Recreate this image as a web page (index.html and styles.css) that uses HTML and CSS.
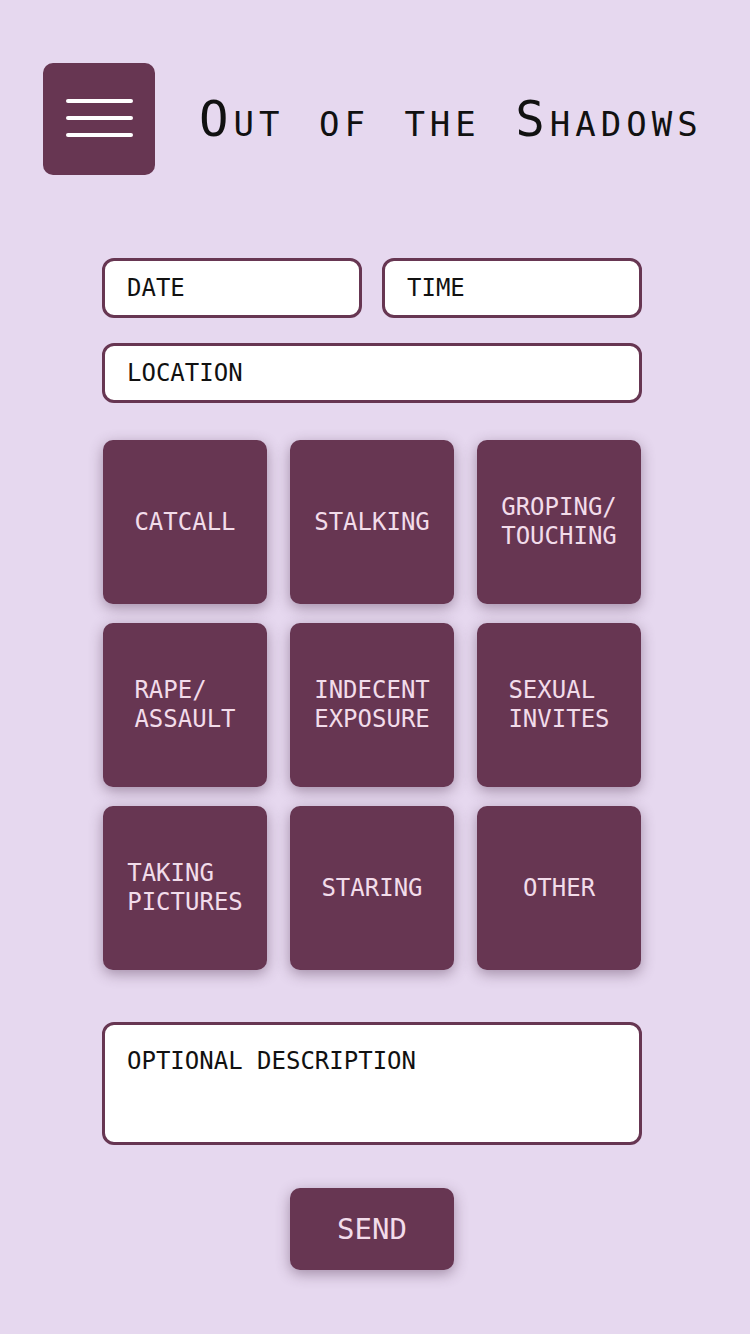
FILE: index.html
```html
<!DOCTYPE html>
<html>
<head>
<meta charset="utf-8">
<link rel="stylesheet" href="styles.css">
</head>
<body>
<header class="top">
  <div class="menu-btn">
    <span class="bar"></span><span class="bar"></span><span class="bar"></span>
  </div>
  <h1 class="title">Out of the Shadows</h1>
</header>
<main class="form">
  <div class="row">
    <div class="field">DATE</div>
    <div class="field">TIME</div>
  </div>
  <div class="field">LOCATION</div>
  <div class="tiles">
    <div class="tile"><span>CATCALL</span></div>
    <div class="tile"><span>STALKING</span></div>
    <div class="tile"><span>GROPING/<br>TOUCHING</span></div>
    <div class="tile"><span>RAPE/<br>ASSAULT</span></div>
    <div class="tile"><span>INDECENT<br>EXPOSURE</span></div>
    <div class="tile"><span>SEXUAL<br>INVITES</span></div>
    <div class="tile"><span>TAKING<br>PICTURES</span></div>
    <div class="tile"><span>STARING</span></div>
    <div class="tile"><span>OTHER</span></div>
  </div>
  <div class="field desc">OPTIONAL DESCRIPTION</div>
  <div class="send-row"><div class="send">SEND</div></div>
</main>
</body>
</html>
```
FILE: styles.css
```css
html, body {
  margin: 0;
  padding: 0;
  background: #e6d8ef;
}
body {
  width: 750px;
  height: 1334px;
  font-family: "DejaVu Sans Mono", "Liberation Mono", monospace;
}
.top {
  display: flex;
  align-items: center;
  padding: 63px 0 0 43px;
  gap: 44px;
}
.menu-btn {
  flex: 0 0 auto;
  width: 112px;
  height: 112px;
  background: #673652;
  border-radius: 10px;
  display: flex;
  flex-direction: column;
  align-items: center;
  justify-content: center;
  gap: 13px;
  box-sizing: border-box;
  padding: 0 0 2px 1px;
}
.bar {
  width: 67px;
  height: 4px;
  border-radius: 2px;
  background: #ffffff;
}
.title {
  margin: 0;
  white-space: nowrap;
  font-weight: normal;
  font-variant: small-caps;
  font-size: 49px;
  line-height: 1;
  letter-spacing: 5px;
  color: #111;
}
.form {
  width: 540px;
  margin: 83px 0 0 102px;
  display: flex;
  flex-direction: column;
}
.row {
  display: flex;
  gap: 20px;
  margin-bottom: 25px;
}
.row .field { flex: 1; }
.field {
  box-sizing: border-box;
  height: 60px;
  border: 3px solid #673652;
  border-radius: 12px;
  background: #fff;
  padding-left: 22px;
  display: flex;
  align-items: center;
  font-size: 24px;
  letter-spacing: 0;
  color: #111;
}
.tiles {
  margin: 37px 0 0 1px;
  display: grid;
  grid-template-columns: repeat(3, 164px);
  grid-auto-rows: 164px;
  column-gap: 23px;
  row-gap: 19px;
}
.tile {
  background: #673652;
  border-radius: 10px;
  box-shadow: 0 4px 14px rgba(80, 50, 80, 0.45);
  display: flex;
  align-items: center;
  justify-content: center;
  color: #f2dcea;
  font-size: 24px;
  line-height: 29px;
}
.tile span { text-align: left; }
.desc {
  margin-top: 52px;
  height: 123px;
  align-items: flex-start;
  padding-top: 22px;
}
.send-row {
  display: flex;
  justify-content: center;
  margin-top: 43px;
}
.send {
  width: 164px;
  height: 82px;
  background: #673652;
  border-radius: 10px;
  box-shadow: 0 4px 14px rgba(80, 50, 80, 0.45);
  display: flex;
  align-items: center;
  justify-content: center;
  color: #f2dcea;
  font-size: 29px;
  box-sizing: border-box;
}
```
